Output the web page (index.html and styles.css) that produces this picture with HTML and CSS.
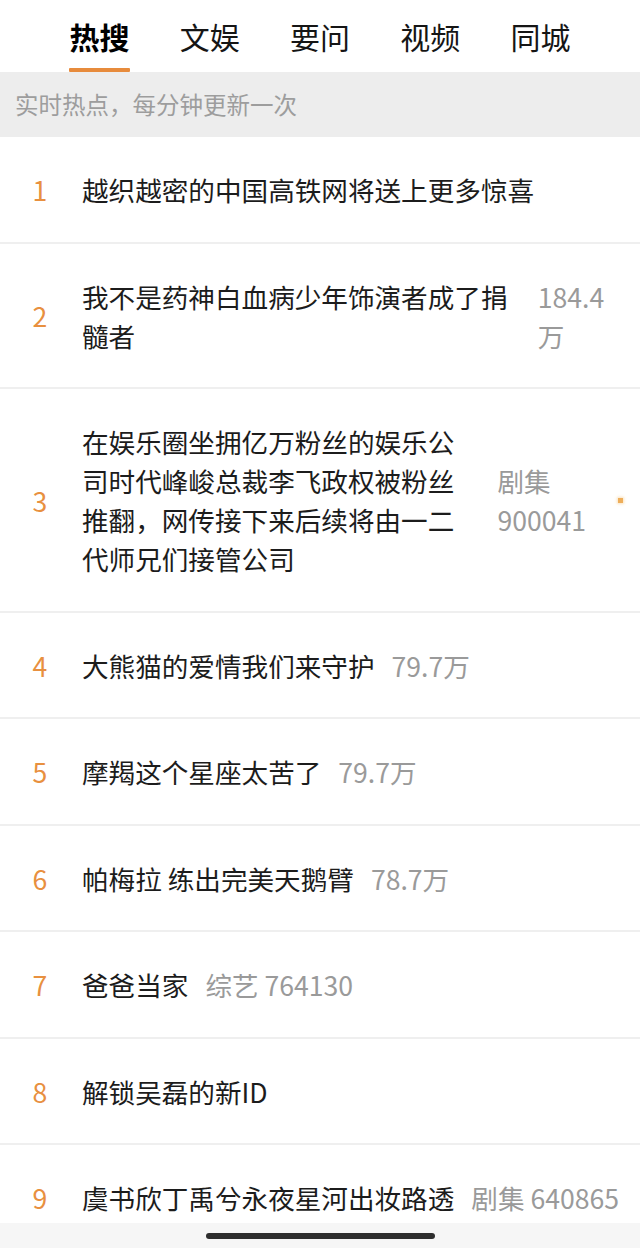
FILE: index.html
```html
<!DOCTYPE html>
<html lang="zh-CN">
<head>
<meta charset="utf-8">
<title>热搜</title>
<link rel="stylesheet" href="styles.css">
</head>
<body>
<header class="tabs">
  <div class="tab active">热搜</div>
  <div class="tab">文娱</div>
  <div class="tab">要问</div>
  <div class="tab">视频</div>
  <div class="tab">同城</div>
</header>
<div class="notice">实时热点，每分钟更新一次</div>
<ul class="list">
  <li class="row"><span class="rank">1</span><span class="title">越织越密的中国高铁网将送上更多惊喜</span></li>
  <li class="row"><span class="rank">2</span><span class="title">我不是药神白血病少年饰演者成了捐髓者</span><span class="meta">184.4万</span></li>
  <li class="row"><span class="rank">3</span><span class="title">在娱乐圈坐拥亿万粉丝的娱乐公司时代峰峻总裁李飞政权被粉丝推翻，网传接下来后续将由一二代师兄们接管公司</span><span class="meta">剧集 900041</span><span class="dot"></span></li>
  <li class="row"><span class="rank">4</span><span class="title">大熊猫的爱情我们来守护</span><span class="meta">79.7万</span></li>
  <li class="row"><span class="rank">5</span><span class="title">摩羯这个星座太苦了</span><span class="meta">79.7万</span></li>
  <li class="row"><span class="rank">6</span><span class="title">帕梅拉 练出完美天鹅臂</span><span class="meta">78.7万</span></li>
  <li class="row"><span class="rank">7</span><span class="title">爸爸当家</span><span class="meta">综艺 764130</span></li>
  <li class="row"><span class="rank">8</span><span class="title">解锁吴磊的新ID</span></li>
  <li class="row"><span class="rank">9</span><span class="title">虞书欣丁禹兮永夜星河出妆路透</span><span class="meta">剧集 640865</span></li>
</ul>
<div class="home-bar"><span class="home-indicator"></span></div>
</body>
</html>
```

FILE: styles.css
```css
* {
  box-sizing: border-box;
}

html, body {
  margin: 0;
  padding: 0;
  background: #ffffff;
}

body {
  font-family: "Noto Sans CJK SC", "Noto Sans", sans-serif;
  color: #1c1c1c;
  width: 640px;
  overflow: hidden;
}

.tabs {
  height: 72px;
  display: flex;
  justify-content: center;
  background: #fff;
}

.tab {
  width: 110.25px;
  display: flex;
  justify-content: center;
  align-items: center;
  font-size: 30px;
  line-height: 40px;
  color: #151515;
  position: relative;
  height: 72px;
}

.tab.active {
  font-weight: 700;
  color: #000;
}

.tab.active::after {
  content: "";
  position: absolute;
  left: 25px;
  right: 25px;
  bottom: 0;
  height: 4px;
  background: #e78b3c;
  border-radius: 1px;
}

.notice {
  height: 65px;
  background: #ededed;
  color: #9d9d9d;
  font-size: 23.5px;
  line-height: 65px;
  padding-left: 15px;
}

.list {
  list-style: none;
  margin: 0;
  padding: 0;
}

.row {
  display: flex;
  align-items: center;
  padding: 33px 17px 32.5px 0;
  border-bottom: 2px solid #efefef;
  font-size: 26.6px;
  line-height: 39px;
}

.rank {
  flex: 0 0 82px;
  padding-right: 2px;
  text-align: center;
  color: #e8903f;
}

.title {
  flex: 0 1 auto;
  color: #1c1c1c;
}

.meta {
  flex: 0 1 auto;
  margin-left: 17px;
  color: #9a9a9a;
}

.dot {
  flex: 0 0 5px;
  width: 5px;
  height: 5px;
  margin-left: 32px;
  background: #eeae5a;
  box-shadow: 0 0 3px 1px rgba(245, 190, 110, 0.45);
}

.home-bar {
  position: fixed;
  left: 0;
  right: 0;
  bottom: 0;
  height: 25px;
  background: #f6f6f6;
  display: flex;
  justify-content: center;
  padding-top: 10px;
}

.home-indicator {
  width: 229px;
  height: 6px;
  border-radius: 3px;
  background: #2e2e2e;
}
```
